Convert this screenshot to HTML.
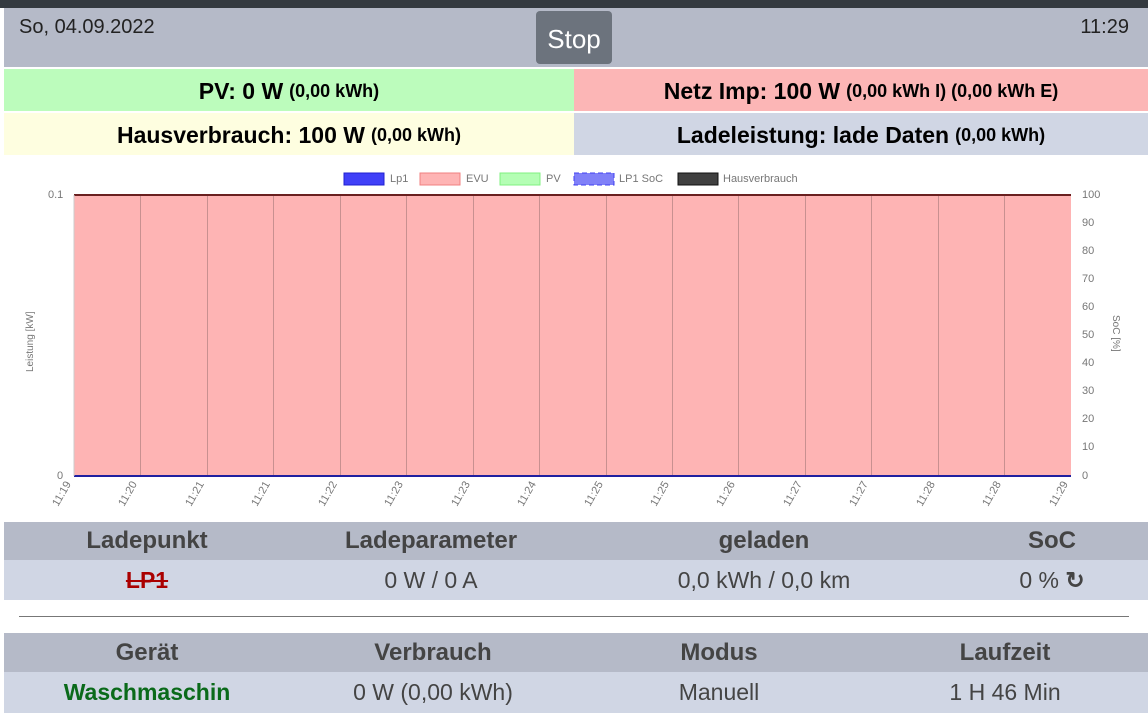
<!DOCTYPE html>
<html><head><meta charset="utf-8"><style>
*{margin:0;padding:0;box-sizing:border-box}
body{width:1148px;height:713px;overflow:hidden;background:#fff;font-family:"Liberation Sans",sans-serif;position:relative}
.a{position:absolute}
.c{display:flex;align-items:center;justify-content:center;font-weight:bold;font-size:23px;color:#000;padding-top:3px}
.c small{font-size:18px;margin-left:6px}
.row{display:flex;position:absolute;left:4px;width:1144px}
.row div{flex:1;text-align:center}
.t1 div:nth-child(1){flex:0 0 286px}.t1 div:nth-child(2){flex:0 0 282px}.t1 div:nth-child(3){flex:0 0 384px}.t1 div:nth-child(4){flex:0 0 192px}
</style></head><body>
<div class="a" style="left:0;top:0;width:1148px;height:8px;background:#343a40"></div>
<div class="a" style="left:4px;top:8px;width:1144px;height:59px;background:#b5bac8"></div>
<div class="a" style="left:19px;top:16px;font-size:20px;color:#222">So, 04.09.2022</div>
<div class="a" style="right:19px;top:16px;font-size:20px;color:#222">11:29</div>
<div class="a" style="left:536px;top:11px;width:76px;height:53px;background:#6c737d;border-radius:4px;color:#fff;font-size:26px;display:flex;align-items:center;justify-content:center;padding-top:4px">Stop</div>
<div class="a c" style="left:4px;top:69px;width:570px;height:42px;background:#bcfcbc">PV: 0 W<small>(0,00 kWh)</small></div>
<div class="a c" style="left:574px;top:69px;width:574px;height:42px;background:#fcb6b6">Netz Imp: 100 W<small>(0,00 kWh I) (0,00 kWh E)</small></div>
<div class="a c" style="left:4px;top:113px;width:570px;height:42px;background:#fefee0">Hausverbrauch: 100 W<small>(0,00 kWh)</small></div>
<div class="a c" style="left:574px;top:113px;width:574px;height:42px;background:#d0d6e4">Ladeleistung: lade Daten<small>(0,00 kWh)</small></div>
<svg class="a" style="left:0;top:160px" width="1148" height="360" font-family="Liberation Sans" font-size="11" fill="#777">
<rect x="344" y="13" width="40" height="12" fill="#4040f8" stroke="#2020d0"/><text x="390" y="22">Lp1</text>
<rect x="420" y="13" width="40" height="12" fill="#feb4b4" stroke="#f08080"/><text x="466" y="22">EVU</text>
<rect x="500" y="13" width="40" height="12" fill="#b4feb4" stroke="#80f080"/><text x="546" y="22">PV</text>
<rect x="574" y="13" width="40" height="12" fill="#8080f8" stroke="#4040f0" stroke-dasharray="5,3"/><text x="619" y="22">LP1 SoC</text>
<rect x="678" y="13" width="40" height="12" fill="#404040" stroke="#111"/><text x="723" y="22">Hausverbrauch</text>
<rect x="74" y="35" width="997" height="281" fill="#feb4b4"/>
<g stroke="#c89090" stroke-width="1">
<path d="M140.5 35V316M207.5 35V316M273.5 35V316M340.5 35V316M406.5 35V316M473.5 35V316M539.5 35V316M606.5 35V316M672.5 35V316M738.5 35V316M805.5 35V316M871.5 35V316M938.5 35V316M1004.5 35V316"/></g>
<line x1="74" y1="35" x2="1071" y2="35" stroke="#6a2020" stroke-width="2"/>
<line x1="74" y1="316" x2="1071" y2="316" stroke="#2020a0" stroke-width="2"/>
<line x1="74" y1="35" x2="74" y2="316" stroke="#ccc"/>
<text x="48" y="38">0.1</text><text x="57" y="319">0</text>
<g font-size="11"><text x="1082" y="38">100</text><text x="1082" y="66">90</text><text x="1082" y="94">80</text><text x="1082" y="122">70</text><text x="1082" y="150">60</text><text x="1082" y="178">50</text><text x="1082" y="206">40</text><text x="1082" y="234">30</text><text x="1082" y="262">20</text><text x="1082" y="290">10</text><text x="1082" y="319">0</text></g>
<text transform="translate(33,212) rotate(-90)" font-size="10">Leistung [kW]</text>
<text transform="translate(1113,155) rotate(90)" font-size="10">SoC [%]</text>
<g font-size="11">
<text transform="translate(58,347) rotate(-60)">11:19</text><text transform="translate(124,347) rotate(-60)">11:20</text><text transform="translate(191,347) rotate(-60)">11:21</text><text transform="translate(257,347) rotate(-60)">11:21</text><text transform="translate(324,347) rotate(-60)">11:22</text><text transform="translate(390,347) rotate(-60)">11:23</text><text transform="translate(457,347) rotate(-60)">11:23</text><text transform="translate(523,347) rotate(-60)">11:24</text><text transform="translate(590,347) rotate(-60)">11:25</text><text transform="translate(656,347) rotate(-60)">11:25</text><text transform="translate(722,347) rotate(-60)">11:26</text><text transform="translate(789,347) rotate(-60)">11:27</text><text transform="translate(855,347) rotate(-60)">11:27</text><text transform="translate(922,347) rotate(-60)">11:28</text><text transform="translate(988,347) rotate(-60)">11:28</text><text transform="translate(1055,347) rotate(-60)">11:29</text></g>
</svg>
<div class="row t1" style="top:522px;height:38px;background:#b5bac8;font-weight:bold;font-size:24px;color:#444;align-items:center"><div>Ladepunkt</div><div>Ladeparameter</div><div>geladen</div><div>SoC</div></div>
<div class="row t1" style="top:560px;height:40px;background:#d0d6e4;font-size:23px;color:#444;align-items:center"><div style="color:#a00;font-weight:bold;text-decoration:line-through">LP1</div><div>0 W / 0 A</div><div>0,0 kWh / 0,0 km</div><div>0 % <b>↻</b></div></div>
<div class="a" style="left:19px;top:616px;width:1110px;height:1px;background:#777"></div>
<div class="row" style="top:633px;height:39px;background:#b5bac8;font-weight:bold;font-size:24px;color:#444;align-items:center"><div>Gerät</div><div>Verbrauch</div><div>Modus</div><div>Laufzeit</div></div>
<div class="row" style="top:672px;height:41px;background:#d0d6e4;font-size:23px;color:#444;align-items:center"><div style="color:#0a6a1a;font-weight:bold">Waschmaschin</div><div>0 W (0,00 kWh)</div><div>Manuell</div><div>1 H 46 Min</div></div>
</body></html>
